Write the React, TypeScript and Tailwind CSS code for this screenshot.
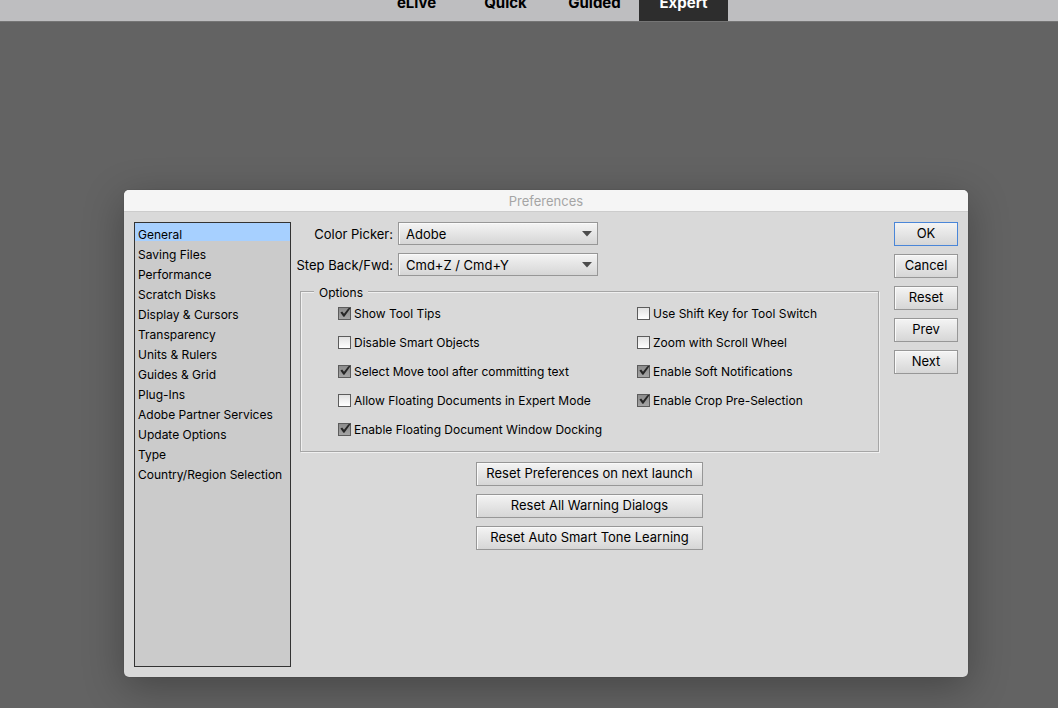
import { useState } from "react";
import clsx from "clsx";

const modes = ["eLive", "Quick", "Guided", "Expert"];

const sections = [
  "General",
  "Saving Files",
  "Performance",
  "Scratch Disks",
  "Display & Cursors",
  "Transparency",
  "Units & Rulers",
  "Guides & Grid",
  "Plug-Ins",
  "Adobe Partner Services",
  "Update Options",
  "Type",
  "Country/Region Selection",
];

const leftOptions = [
  { label: "Show Tool Tips", checked: true },
  { label: "Disable Smart Objects", checked: false },
  { label: "Select Move tool after committing text", checked: true },
  { label: "Allow Floating Documents in Expert Mode", checked: false },
  { label: "Enable Floating Document Window Docking", checked: true },
];

const rightOptions = [
  { label: "Use Shift Key for Tool Switch", checked: false },
  { label: "Zoom with Scroll Wheel", checked: false },
  { label: "Enable Soft Notifications", checked: true },
  { label: "Enable Crop Pre-Selection", checked: true },
];

function PushButton({ label, primary = false }: { label: string; primary?: boolean }) {
  return (
    <button
      type="button"
      className={clsx(
        "h-6 w-full border bg-linear-to-b from-[#f4f4f4] to-[#d6d6d6] pb-[2px] text-[13px] leading-5 whitespace-nowrap",
        primary
          ? "border-[#4a86d8]"
          : "border-[#979797] shadow-[inset_1px_1px_0_#fafafa]"
      )}
    >
      {label}
    </button>
  );
}

function Dropdown({ id, label, options }: { id: string; label: string; options: string[] }) {
  return (
    <div className="flex items-center gap-[5px]">
      <label htmlFor={id} className="flex w-[93px] justify-end pt-[2px] text-[13px] whitespace-nowrap">
        {label}
      </label>
      <div className="relative w-[200px]">
        <select
          id={id}
          className="block h-[23px] w-full appearance-none border border-[#979797] bg-linear-to-b from-[#f4f4f4] to-[#d6d6d6] pt-[2px] pr-6 pl-[7px] text-[13px] shadow-[inset_1px_1px_0_#fafafa]"
        >
          {options.map((option) => (
            <option key={option}>{option}</option>
          ))}
        </select>
        <svg
          viewBox="0 0 10 6"
          className="pointer-events-none absolute top-[9px] right-[6px] h-[6px] w-[10px]"
        >
          <path d="M0 0h10L5 5.5z" fill="#4c4c4c" />
        </svg>
      </div>
    </div>
  );
}

function Option({ label, checked }: { label: string; checked: boolean }) {
  const [on, setOn] = useState(checked);

  return (
    <label className="flex h-[29px] items-center gap-[3px] whitespace-nowrap">
      <span className="relative block h-[13px] w-[13px]">
        <input
          type="checkbox"
          checked={on}
          onChange={() => setOn(!on)}
          className="block h-[13px] w-[13px] appearance-none border border-[#5c5c5c] bg-linear-to-b from-[#e2e2e2] to-white checked:from-[#8c8c8c] checked:to-[#a4a4a4]"
        />
        {on && (
          <svg viewBox="0 0 13 13" className="pointer-events-none absolute inset-0 h-[13px] w-[13px]">
            <path d="M2.4 5.4 4.2 4.6 6 6.8 10.4 1.2 12.8.8 6.4 9.8 5.4 9.8z" fill="#262626" />
          </svg>
        )}
      </span>
      {label}
    </label>
  );
}

export default function App() {
  const [section, setSection] = useState("General");

  return (
    <div className="min-h-screen bg-[#636363] font-['Inter',sans-serif] text-xs text-black">
      <header className="flex h-[22px] items-end overflow-hidden border-b border-[#757575] bg-[#bebec0] pl-[372px]">
        {modes.map((mode) => (
          <button
            key={mode}
            type="button"
            className={clsx(
              "h-9 w-[89px] shrink-0 text-[15px] font-bold",
              mode === "Expert" && "bg-[#2d2d2d] text-white"
            )}
          >
            {mode}
          </button>
        ))}
      </header>

      <main className="pt-[168px] pr-[90px] pb-[31px] pl-[124px]">
        <div
          role="dialog"
          aria-labelledby="dialog-title"
          className="rounded-[5px] bg-[#d9d9d9] shadow-[0_0_1px_rgba(0,0,0,0.4),0_10px_40px_rgba(0,0,0,0.3)]"
        >
          <h1
            id="dialog-title"
            className="h-[22px] rounded-t-[5px] border-b border-[#cccccc] bg-[#f5f5f5] text-center text-[13px] leading-[22px] font-normal text-[#a5a5a5]"
          >
            Preferences
          </h1>

          <div className="flex p-[10px]">
            <ul className="flex min-h-[445px] w-[157px] shrink-0 flex-col gap-[2px] border border-[#333333] bg-[#cbcbcb]">
              {sections.map((name) => (
                <li key={name}>
                  <button
                    type="button"
                    onClick={() => setSection(name)}
                    className={clsx(
                      "block h-[18px] w-full pt-[5px] pl-[3px] text-left leading-[13px] whitespace-nowrap",
                      name === section && "bg-[#a7d0ff]"
                    )}
                  >
                    {name}
                  </button>
                </li>
              ))}
            </ul>

            <div className="ml-[9px] flex-1">
              <div className="flex flex-col gap-2">
                <Dropdown id="color-picker" label="Color Picker:" options={["Adobe", "Apple"]} />
                <Dropdown
                  id="step-back"
                  label="Step Back/Fwd:"
                  options={["Cmd+Z / Cmd+Y", "Cmd+Z / Cmd+Shift+Z"]}
                />
              </div>

              <fieldset className="mt-[7px] border border-[#a6a6a6] pb-[7px] pl-[37px] shadow-[inset_1px_1px_0_#f0f0f0,1px_1px_0_#f0f0f0]">
                <legend className="-ml-6 bg-[#d9d9d9] px-[5px] pt-1 leading-3">Options</legend>
                <div className="grid grid-cols-[299px_1fr]">
                  <div>
                    {leftOptions.map((option) => (
                      <Option key={option.label} {...option} />
                    ))}
                  </div>
                  <div>
                    {rightOptions.map((option) => (
                      <Option key={option.label} {...option} />
                    ))}
                  </div>
                </div>
              </fieldset>

              <div className="mx-auto mt-[10px] flex w-[227px] flex-col gap-2">
                <PushButton label="Reset Preferences on next launch" />
                <PushButton label="Reset All Warning Dialogs" />
                <PushButton label="Reset Auto Smart Tone Learning" />
              </div>
            </div>

            <div className="ml-[15px] flex w-16 shrink-0 flex-col gap-2">
              <PushButton label="OK" primary />
              <PushButton label="Cancel" />
              <PushButton label="Reset" />
              <PushButton label="Prev" />
              <PushButton label="Next" />
            </div>
          </div>
        </div>
      </main>
    </div>
  );
}
